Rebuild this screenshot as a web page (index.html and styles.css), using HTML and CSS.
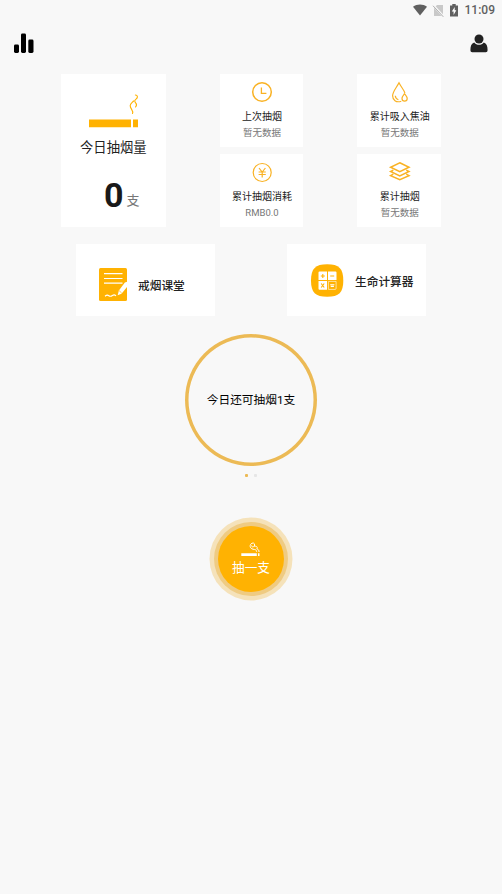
FILE: index.html
```html
<!DOCTYPE html>
<html lang="zh-CN">
<head>
<meta charset="utf-8">
<title>今日抽烟量</title>
<link rel="stylesheet" href="styles.css">
</head>
<body>
<header class="status">
  <svg width="16" height="12" viewBox="0 0 16 12"><path d="M1 2.8C5-.4 11-.4 15 2.8L8 11.5Z" fill="#606060"/></svg>
  <svg class="sim" width="11" height="13" viewBox="0 0 11 13"><path d="M4 1h6v11H1V4Z" fill="#c9c9c9"/><path d="M0 1l10.5 11.5" stroke="#f7f7f7" stroke-width="2.2"/><path d="M0 1.8l10.3 11" stroke="#b0b0b0" stroke-width="1"/></svg>
  <svg class="battery" width="8" height="13" viewBox="0 0 8 13"><path d="M0 1.5h2.3V0h3.4v1.5H8V12.5H0Z" fill="#606060"/><path d="M4.7 3L1.8 7.6h1.8V11l2.7-4.8H4.7Z" fill="#fff"/></svg>
  <span class="time">11:09</span>
</header>
<nav class="topbar">
  <svg width="20" height="20" viewBox="0 0 20 20"><rect y="10.500" width="5" height="8.500" rx="1.4"/><rect x="7" y="-.5" width="5" height="19.500" rx="1.4"/><rect x="14.300" y="5.500" width="5.200" height="13.500" rx="1.4"/></svg>
  <svg width="18" height="19" viewBox="0 0 18 19"><g fill="#222"><circle cx="9" cy="5" r="4.500"/><path d="M4.200 8.500C6.500 11.600 11.500 11.600 13.800 8.500C16.500 9.200 17.600 12 17.600 16.300Q17.600 18.300 15.800 18.300H2.200Q.4 18.300.4 16.300C.4 12 1.500 9.200 4.200 8.500Z"/></g></svg>
</nav>
<main>
  <section class="stats">
    <article class="card today">
      <svg class="cigarette" width="50" height="34" viewBox="0 0 50 34"><path d="M0 25.500h42v7.700H0zM44 25.500h5v7.700h-5z" fill="#ffb202"/><path d="M43.500 19.500c1.400-3-2.500-4.600-2.300-8 .1-2 2-3 3.400-4.500M46.500 13c3.200-3.600-1.200-3.600-.7-6.400.3-1.600 3-1.700 2.600-4.100-.2-1-.8-1.500-2-1.500" fill="none" stroke="#ffb202" stroke-width="1.1" stroke-linecap="round"/></svg>
      <h2>今日抽烟量</h2>
      <p class="count"><b>0</b><span>支</span></p>
    </article>
    <div class="column">
      <article class="card stat">
        <svg width="22" height="22" viewBox="0 0 22 22"><circle cx="11" cy="11" r="9.3" stroke-width="1.5"/><path d="M10.400 6.500v5.900h5" stroke-width="1.3"/></svg>
        <h3>上次抽烟</h3><p>暂无数据</p>
      </article>
      <article class="card stat">
        <svg width="22" height="22" viewBox="0 0 22 22"><circle cx="11.200" cy="11.500" r="9" stroke-width="1.2"/><path d="M8 7l3.200 4L14.400 7M7.600 11h7.200M7.600 13.500h7.200M11.200 11v5.500" stroke-width="1.2"/></svg>
        <h3>累计抽烟消耗</h3><p>RMB0.0</p>
      </article>
    </div>
    <div class="column">
      <article class="card stat">
        <svg width="22" height="22" viewBox="0 0 22 22"><path d="M12.300 20.200C7 22 3.600 18.800 3.600 14.800 3.600 10.700 7.600 6.500 10 1.800c2 4.200 4.800 6.800 5.900 10.200M6.300 14.800c.1 2.100 1.200 3.300 3.100 3.900M15.500 12.700c-1.200 1.600-2.500 3-2.500 4.800a2.600 2.600 0 0 0 5.200 0c0-1.800-1.500-3.200-2.700-4.800Z" stroke-width="1.2"/></svg>
        <h3>累计吸入焦油</h3><p>暂无数据</p>
      </article>
      <article class="card stat">
        <svg width="22" height="22" viewBox="0 0 22 22"><path d="M10.800 1.800l9.200 4.400-9.200 4.500-9.200-4.500ZM4.300 9.100L1.600 10.500l9.200 4.400 9.200-4.400-2.700-1.400M4.300 13.200l-2.700 1.400 9.200 4.200 9.200-4.200-2.700-1.400" stroke-width="1.5"/></svg>
        <h3>累计抽烟</h3><p>暂无数据</p>
      </article>
    </div>
  </section>
  <section class="links">
    <a class="card link lesson">
      <svg width="29" height="33" viewBox="0 0 29 33"><rect width="28" height="33" rx="1.5" fill="#ffb202"/><path d="M5 5.700h18.500M5 10.500h18.500M5 15.200h18.500" stroke="#fff" stroke-width="1.2"/><path d="M6 28.200q2.200-1.800 3.800-.5t3.600-.2 3.600.5" fill="none" stroke="#fff" stroke-width="1.1"/><path d="M18.700 27.200l1.200-4.800 6-8 3.100-.8v4.200l-6.500 8Z" fill="#fff"/><path d="M20 22.500l2.700 2.600" stroke="#ffb202" stroke-width=".7"/></svg>
      <span>戒烟课堂</span>
    </a>
    <a class="card link calculator">
      <svg width="33" height="33" viewBox="0 0 33 33"><path d="M16.200.2C28 .2 32.300 4.500 32.300 16.500S28 32.800 16.200 32.800 0 28.500 0 16.500 4.400.2 16.200.2Z" fill="#ffb202"/><path d="M8.500 7.500H16V16H7.500V8.500Q7.500 7.500 8.500 7.500ZM17 7.500h7.500q1 0 1 1V16H17ZM7.500 17H16v8.800H8.500q-1 0-1-1Z" fill="#fff"/><path d="M17.400 17.400h7.700v7q0 1-1 1h-6.700Z" fill="none" stroke="#fff" stroke-width=".6"/><path d="M9.800 12h4M11.800 10v4M19.200 12h4M10.200 19.500l3 4M13.200 19.500l-3 4" stroke="#ffb202" stroke-width="1.1"/><path d="M19.200 20.700h4.200M19.700 22.400h3.200" stroke="#fff" stroke-width="1.1"/></svg>
      <span>生命计算器</span>
    </a>
  </section>
  <section class="allowance">今日还可抽烟1支</section>
  <div class="dots"><i></i><i></i></div>
  <button class="smoke">
    <svg width="20" height="15" viewBox="0 0 20 15"><path d="M.3 11.300h15.500v2.700H.3zM17 11.300h1.500v2.700H17z" fill="#fff"/><path d="M15.600 9.700C15.500 7.500 14.300 7.700 12 7.200 8.500 6.500 8.300 2.500 11 1.200c2.600-.8 3 1.400 2.300 3 3.200-.3 3.300 1.400 2.500 2.800 1.700.2 2.200 1.200 2.200 3M10.500 3.500c.3 1.900 1.500 1.500 2.800.7" fill="none" stroke="#fff" stroke-width="1"/></svg>
    <span>抽一支</span>
  </button>
</main>
</body>
</html>
```
FILE: styles.css
```css
* { box-sizing: border-box; }
body {
  margin: 0;
  min-height: 894px;
  background: #f8f8f8;
  color: #222;
  font-family: Roboto, "Noto Sans CJK SC", sans-serif;
}
h2, h3, p { margin: 0; font-weight: 400; white-space: nowrap; }
svg { display: block; flex: none; overflow: visible; }

.status {
  display: flex;
  justify-content: flex-end;
  align-items: center;
  height: 20px;
  padding-right: 7px;
}
.sim { margin-left: 5px; }
.battery { margin-left: 6px; }
.time {
  margin-left: 7px;
  color: #606060;
  font-size: 12px;
  font-weight: 500;
  line-height: 21px;
}
.topbar {
  display: flex;
  justify-content: space-between;
  height: 54px;
  padding: 14px 14px 0;
}

main { display: flex; flex-direction: column; align-items: center; }
.card { background: #fff; }
.stats {
  display: flex;
  width: 380px;
  height: 153px;
}
.today {
  display: flex;
  flex-direction: column;
  align-items: center;
  width: 105px;
  padding-top: 20px;
  margin-right: 54px;
}
.today h2 { margin-top: 10px; font-size: 13.3px; line-height: 20px; }
.cigarette { margin-left: 1px; }
.count {
  display: flex;
  align-items: baseline;
  gap: 3px;
  margin: 17px 0 0 17px;
  line-height: 40px;
}
.count b { font-size: 34px; color: #191919; }
.count span { font-size: 13px; color: #777; transform: translateY(-2px); }
.column {
  display: grid;
  grid-template-rows: 73px 73px;
  gap: 7px;
  width: 84px;
}
.column + .column { margin-left: 54px; }
.stat {
  display: flex;
  flex-direction: column;
  align-items: center;
  padding: 7px 0 0 1px;
}
.stat svg { fill: none; stroke: #f9b224; }
.stat h3 { margin-top: 5px; font-size: 10px; line-height: 17px; }
.stat p { color: #777; font-size: 9.5px; line-height: 16px; }

.links {
  display: flex;
  gap: 72px;
  margin-top: 17px;
}
.link {
  display: flex;
  width: 139px;
  height: 72px;
  font-size: 11.7px;
  font-weight: 500;
  line-height: 18px;
  white-space: nowrap;
}
.lesson { padding: 24px 0 0 23px; gap: 10px; }
.lesson span { margin-top: 9px; }
.calculator { padding: 20px 0 0 24px; gap: 11px; }
.calculator span { margin-top: 9px; }

.allowance {
  display: grid;
  place-items: center;
  width: 132px;
  height: 132px;
  margin-top: 18px;
  padding-bottom: 3px;
  border-radius: 50%;
  box-shadow: inset 0 0 0 3.5px #ecba55;
  color: #000;
  font-size: 11.7px;
}
.dots { display: flex; gap: 6px; margin-top: 8px; }
.dots i { width: 3px; height: 3px; border-radius: 1px; background: #ecba55; }
.dots i + i { background: #e6e6e6; }

.smoke {
  display: flex;
  flex-direction: column;
  align-items: center;
  width: 66px;
  height: 66px;
  margin-top: 49px;
  padding: 16px 0 0;
  border: 0;
  border-radius: 50%;
  background: #ffb202;
  box-shadow: 0 0 0 4px #efcb82, 0 0 0 8.5px #f5e2ba;
  color: #fff;
  font: 12.6px/22px Roboto, "Noto Sans CJK SC", sans-serif;
}
```
